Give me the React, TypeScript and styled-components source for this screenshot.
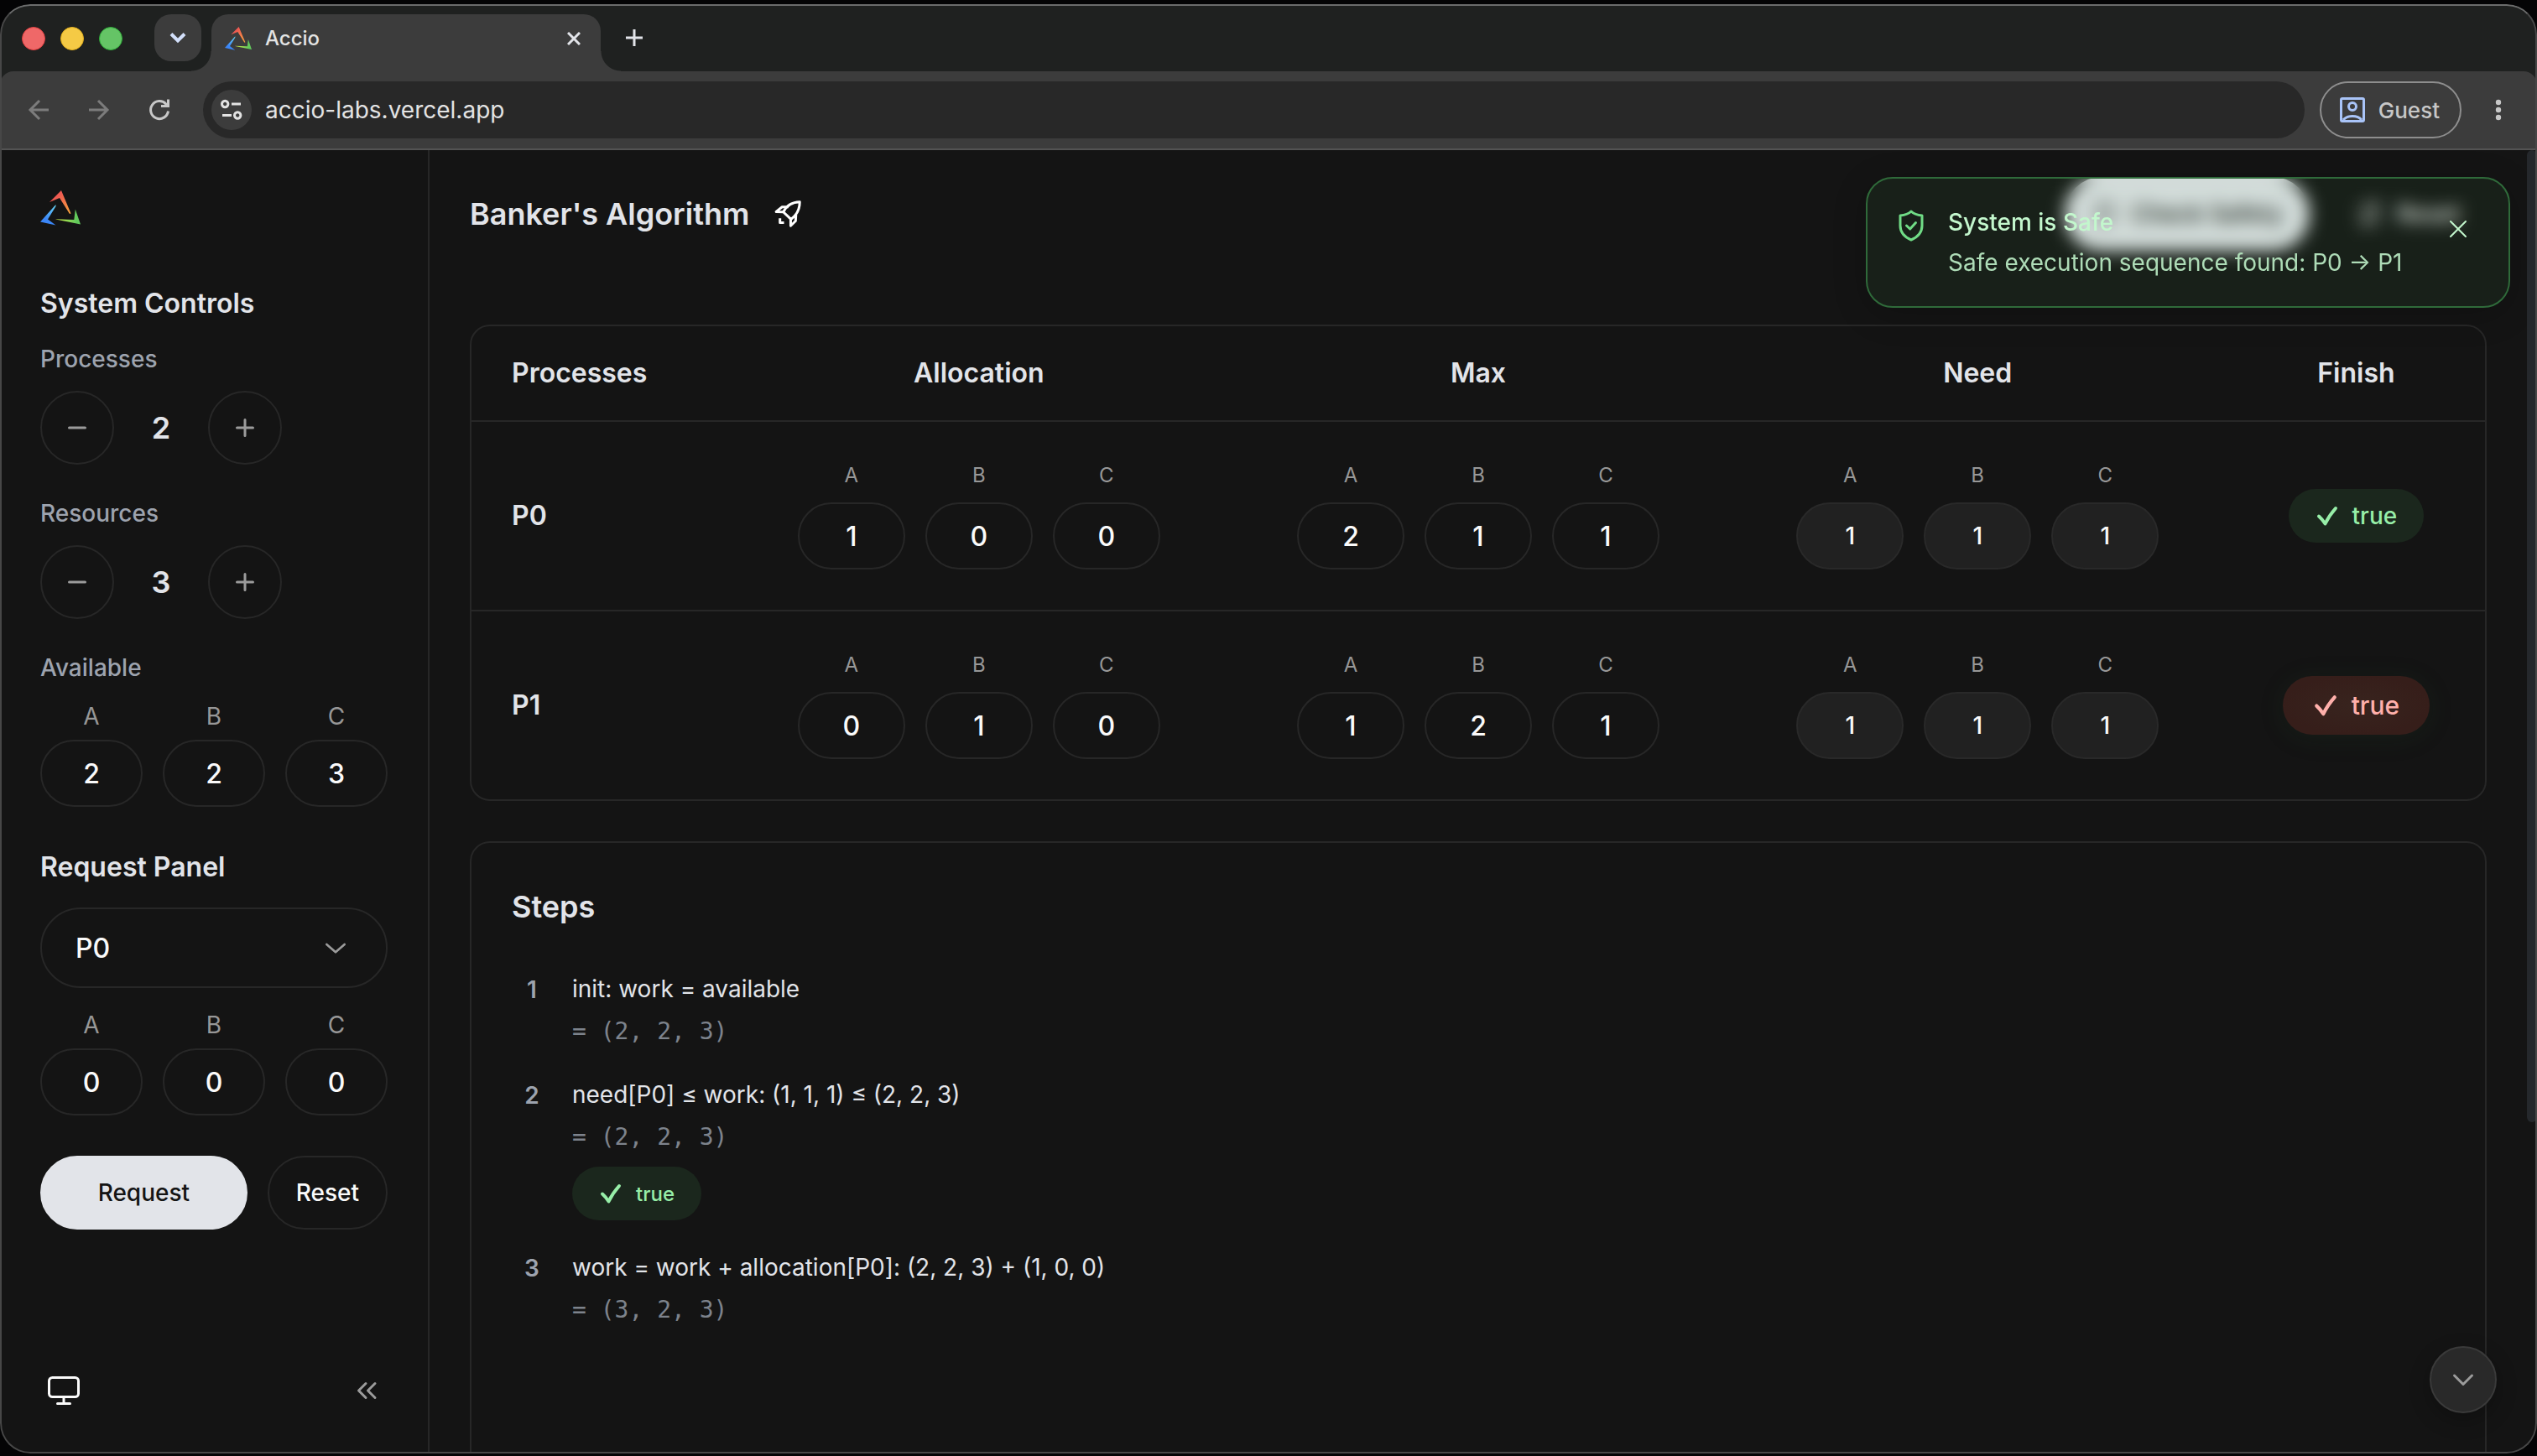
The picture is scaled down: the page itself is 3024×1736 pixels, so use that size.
import React, { useState } from 'react';
import styled, { createGlobalStyle, css } from 'styled-components';

const sans = "Inter, 'Liberation Sans', sans-serif";

const GlobalStyle = createGlobalStyle`
  *, *::before, *::after { box-sizing: border-box; }
  html, body, #root { height: 100%; }
  body { margin: 0; background: #040405; font-family: ${sans}; color: #e2e4e9; overflow: hidden; }
  button, input, select { font-family: inherit; margin: 0; }
  h1, h2, p, ol { margin: 0; padding: 0; }
  svg { display: block; flex: none; }
`;

/* ---------- browser window ---------- */

const Desktop = styled.div`
  height: 100%;
  padding: 5px 0 3px;
`;

const Window = styled.div`
  position: relative;
  height: 100%;
  display: flex;
  flex-direction: column;
  border-radius: 36px;
  overflow: hidden;
  background: #1f2120;

  &::after {
    content: '';
    position: absolute;
    inset: 0;
    border: 2px solid #474747;
    border-top-color: #6b6c6c;
    border-radius: 36px;
    pointer-events: none;
    z-index: 20;
  }
`;

const TabStrip = styled.div`
  display: flex;
  align-items: flex-end;
  height: 80px;
  padding-left: 26px;
`;

const Lights = styled.div`
  display: flex;
  gap: 18px;
  margin: 0 38px 25px 0;
`;

const Light = styled.button<{ $color: string; $edge: string }>`
  width: 28px;
  height: 28px;
  padding: 0;
  border: 1px solid ${(p) => p.$edge};
  border-radius: 50%;
  background: ${(p) => p.$color};
`;

const TabSearch = styled.button`
  display: grid;
  place-items: center;
  width: 56px;
  height: 56px;
  margin: 0 12px 12px 0;
  padding: 0;
  border: 0;
  border-radius: 20px;
  background: #3c3c3c;
`;

const Tab = styled.div`
  position: relative;
  display: flex;
  align-items: center;
  width: 464px;
  height: 68px;
  padding: 0 24px 10px 16px;
  border-radius: 20px 20px 0 0;
  background: #3c3c3c;
  font-size: 24px;
  font-weight: 500;
  line-height: 32px;

  &::before,
  &::after {
    content: '';
    position: absolute;
    bottom: 0;
    width: 24px;
    height: 24px;
  }
  &::before {
    right: 100%;
    background: radial-gradient(circle at 0 0, transparent 23px, #3c3c3c 24px);
  }
  &::after {
    left: 100%;
    background: radial-gradient(circle at 100% 0, transparent 23px, #3c3c3c 24px);
  }
`;

const TabTitle = styled.span`
  flex: 1;
  margin-left: 16px;
  color: #e3e3e3;
`;

const PlainButton = styled.button`
  display: grid;
  place-items: center;
  padding: 0;
  border: 0;
  background: none;
  color: inherit;
`;

const NewTab = styled(PlainButton)`
  margin: 0 0 28px 28px;
`;

const Toolbar = styled.div`
  display: flex;
  align-items: center;
  height: 94px;
  padding: 0 32px;
  border-bottom: 2px solid #535353;
  border-radius: 16px 16px 0 0;
  background: #3c3c3c;
  color: #c7c7c7;
`;

const NavButtons = styled.div`
  display: flex;
  gap: 44px;
  margin-right: 38px;
`;

const NavButton = styled(PlainButton)<{ $dim?: boolean }>`
  width: 28px;
  height: 28px;
  color: ${(p) => (p.$dim ? '#7c7c7c' : '#c7c7c7')};
`;

const AddressBar = styled.div`
  display: flex;
  align-items: center;
  flex: 1;
  height: 68px;
  padding: 0 10px;
  border-radius: 34px;
  background: #282828;
`;

const SiteInfo = styled(PlainButton)`
  width: 48px;
  height: 48px;
  border-radius: 50%;
  background: #3c3c3c;
  color: #e3e3e3;
`;

const Url = styled.input`
  flex: 1;
  margin-left: 16px;
  padding: 0;
  border: 0;
  outline: 0;
  background: none;
  color: #e3e3e3;
  font-size: 28px;
  line-height: 36px;
`;

const Guest = styled.button`
  display: flex;
  align-items: center;
  gap: 16px;
  height: 68px;
  margin-left: 18px;
  padding: 0 24px 0 22px;
  border: 2px solid #8e8e8e;
  border-radius: 34px;
  background: none;
  color: #c7c7c7;
  font-size: 26px;
  font-weight: 500;
`;

const Kebab = styled(PlainButton)`
  width: 28px;
  margin-left: 30px;
`;

/* ---------- page ---------- */

const Page = styled.div`
  position: relative;
  flex: 1;
  min-height: 0;
  display: flex;
  background: #141414;
`;

const Sidebar = styled.aside`
  display: flex;
  flex-direction: column;
  flex: none;
  width: 512px;
  padding: 48px 48px 0;
  border-right: 2px solid #272727;
`;

const SideHeading = styled.h2`
  font-size: 32px;
  font-weight: 600;
  line-height: 40px;
  color: #e2e4e9;
`;

const SideLabel = styled.div`
  font-size: 28px;
  font-weight: 500;
  line-height: 40px;
  color: #9da3ae;
`;

const Block = styled.section<{ $top: number; $gap: number }>`
  display: flex;
  flex-direction: column;
  gap: ${(p) => p.$gap}px;
  margin-top: ${(p) => p.$top}px;
`;

const StepperRow = styled.div`
  display: flex;
  align-items: center;
`;

const RoundButton = styled.button`
  display: grid;
  place-items: center;
  width: 88px;
  height: 88px;
  padding: 0;
  border: 2px solid #272727;
  border-radius: 50%;
  background: none;
  color: #9b9b9b;
`;

const StepperValue = styled.output`
  width: 112px;
  text-align: center;
  font-size: 36px;
  font-weight: 600;
  line-height: 44px;
`;

const Fields = styled.div`
  display: flex;
  justify-content: center;
  gap: 24px;
`;

const Field = styled.label<{ $table?: boolean }>`
  display: flex;
  flex-direction: column;
  align-items: center;
  ${(p) =>
    p.$table
      ? css`
          width: 128px;
          gap: 16px;
          font-size: 24px;
          line-height: 32px;
        `
      : css`
          flex: 1;
          min-width: 0;
          gap: 12px;
          font-size: 28px;
          line-height: 32px;
        `}
  font-weight: 400;
  color: #979797;
`;

const NumberBox = styled.input`
  width: 100%;
  height: 80px;
  padding: 0;
  border: 2px solid #272727;
  border-radius: 40px;
  outline: 0;
  background: none;
  color: #fafafa;
  text-align: center;
  font-size: 32px;
  font-weight: 500;

  &:read-only {
    background: #212121;
    border-color: #292929;
    font-size: 28px;
  }
`;

const SelectWrap = styled.div`
  position: relative;
  color: #9b9b9b;

  svg {
    position: absolute;
    right: 46px;
    top: 32px;
    pointer-events: none;
  }
`;

const ProcessSelect = styled.select`
  appearance: none;
  display: block;
  width: 100%;
  height: 96px;
  padding: 0 40px;
  border: 2px solid #272727;
  border-radius: 48px;
  background: none;
  color: #fafafa;
  font-size: 32px;
  font-weight: 500;
`;

const Actions = styled.div`
  display: flex;
  gap: 24px;
  margin-top: 48px;
`;

const Button = styled.button<{ $solid?: boolean; $grow?: boolean }>`
  display: flex;
  align-items: center;
  justify-content: center;
  gap: 16px;
  height: 88px;
  padding: 0 32px;
  ${(p) => p.$grow && 'flex: 1;'}
  border: 2px solid ${(p) => (p.$solid ? '#e2e4e9' : '#272727')};
  border-radius: 44px;
  background: ${(p) => (p.$solid ? '#e2e4e9' : 'transparent')};
  color: ${(p) => (p.$solid ? '#141414' : '#fafafa')};
  font-size: 28px;
  font-weight: 500;
`;

const HeaderButton = styled(Button)`
  padding: 0 30px;
  border-color: ${(p) => (p.$solid ? '#e2e4e9' : 'transparent')};
`;

const SideFooter = styled.footer`
  display: flex;
  align-items: center;
  justify-content: space-between;
  margin-top: auto;
  padding: 0 12px 56px 8px;
  color: #fafafa;
`;

const Collapse = styled(PlainButton)`
  color: #9b9b9b;
`;

const Main = styled.main`
  flex: 1;
  min-width: 0;
  overflow: hidden;
  padding: 32px 60px 0 48px;
`;

const Header = styled.header`
  display: flex;
  align-items: center;
  height: 88px;
  margin-bottom: 88px;
`;

const Title = styled.h1`
  font-size: 36px;
  font-weight: 600;
  line-height: 48px;
`;

const RocketButton = styled(PlainButton)`
  margin-left: 28px;
  color: #fff;
`;

const HeaderActions = styled.div`
  display: flex;
  gap: 24px;
  margin-left: auto;
`;

const Card = styled.section`
  border: 2px solid #272727;
  border-radius: 24px;
  overflow: hidden;
`;

const Table = styled.table`
  width: 100%;
  table-layout: fixed;
  border-collapse: separate;
  border-spacing: 0;

  th,
  td {
    padding: 0;
    text-align: center;
  }
  th:first-child {
    padding-left: 48px;
    text-align: left;
  }
  thead th {
    height: 114px;
    border-bottom: 2px solid #272727;
  }
  tbody th,
  tbody td {
    height: 226px;
    border-bottom: 2px solid #272727;
  }
  tbody tr:last-child > * {
    height: 224px;
    border-bottom: 0;
  }
`;

const Col = styled.col<{ $wide?: boolean }>`
  width: ${(p) => (p.$wide ? '24.8%' : 'auto')};
`;

const HeadCell = styled.th`
  font-size: 32px;
  font-weight: 600;
  line-height: 40px;
`;

const Badge = styled.span<{ $size?: 'small' | 'large'; $alert?: boolean }>`
  display: inline-flex;
  align-items: center;
  justify-content: center;
  height: ${(p) => (p.$alert ? 70 : 64)}px;
  padding: 0 ${(p) => (p.$alert ? 36 : 32)}px;
  gap: 16px;
  border-radius: 36px;
  vertical-align: middle;
  font-size: ${(p) => (p.$alert ? 30 : p.$size === 'small' ? 24 : 28)}px;
  font-weight: 500;
  ${(p) =>
    p.$alert
      ? css`
          background: radial-gradient(closest-side, #38241e, #361e1a);
          color: #ffb0ab;
          box-shadow: 0 4px 30px rgba(40, 80, 44, 0.16);
        `
      : css`
          background: #1b271d;
          color: #97eea8;
        `}
`;

const StepsCard = styled(Card)`
  height: 900px;
  margin-top: 48px;
  padding: 48px;
`;

const StepsTitle = styled.h2`
  font-size: 36px;
  font-weight: 600;
  line-height: 56px;
`;

const StepList = styled.ol`
  display: flex;
  flex-direction: column;
  gap: 32px;
  margin-top: 48px;
  list-style: none;
`;

const StepItem = styled.li`
  display: flex;
  gap: 24px;
`;

const StepNumber = styled.span`
  width: 48px;
  text-align: center;
  font-size: 28px;
  font-weight: 600;
  line-height: 46px;
  color: #9da3ae;
`;

const StepBody = styled.div`
  display: flex;
  flex-direction: column;
  align-items: flex-start;

  ${Badge} {
    margin: 14px 0 2px;
  }
`;

const StepText = styled.p`
  font-size: 28px;
  line-height: 44px;
  color: #e2e4e9;
`;

const StepResult = styled.p`
  margin-top: 8px;
  font-family: 'DejaVu Sans Mono', monospace;
  font-size: 28px;
  line-height: 42px;
  color: #7d838c;
`;

/* ---------- overlays ---------- */

const Toast = styled.div`
  position: absolute;
  top: 32px;
  right: 32px;
  display: flex;
  align-items: flex-start;
  width: 768px;
  height: 156px;
  padding: 30px 50px 0 36px;
  border: 2px solid #2f6a3a;
  border-radius: 32px;
  background: rgba(72, 152, 80, 0.1);
  backdrop-filter: blur(10px);
  box-shadow: 0 8px 40px rgba(0, 0, 0, 0.2);
  color: #c3f7cd;

  > svg {
    margin-top: 6px;
  }
`;

const ToastText = styled.div`
  flex: 1;
  margin-left: 28px;
  font-size: 28px;
  line-height: 44px;
`;

const ToastTitle = styled.p`
  font-weight: 500;
`;

const ToastBody = styled.p`
  margin-top: 4px;
  color: #aedcb7;
`;

const ToastClose = styled(PlainButton)`
  margin-top: 20px;
`;

const ScrollDown = styled.button`
  position: absolute;
  right: 48px;
  bottom: 48px;
  display: grid;
  place-items: center;
  width: 80px;
  height: 80px;
  padding: 0;
  border: 2px solid #3a3a3a;
  border-radius: 50%;
  background: #292929;
  box-shadow: 0 8px 24px rgba(0, 0, 0, 0.25);
  color: #9b9b9b;
`;

const ScrollThumb = styled.div`
  position: absolute;
  top: 0;
  right: 0;
  width: 12px;
  height: 1159px;
  border-radius: 6px;
  background: #25282c;
`;

/* ---------- drawings ---------- */

const Logo = ({ width, id }: { width: number; id: string }) => (
  <svg width={width} height={(width * 42) / 48} viewBox="0 0 48 42" aria-hidden="true">
    <defs>
      <linearGradient id={`${id}r`} x1="14" y1="4" x2="36" y2="28" gradientUnits="userSpaceOnUse">
        <stop offset="0.2" stopColor="#ee5a52" />
        <stop offset="1" stopColor="#f7a53c" />
      </linearGradient>
      <linearGradient id={`${id}b`} x1="18" y1="17" x2="6" y2="40" gradientUnits="userSpaceOnUse">
        <stop offset="0" stopColor="#6ad7f5" />
        <stop offset="0.8" stopColor="#3b86f7" />
      </linearGradient>
      <linearGradient id={`${id}g`} x1="18" y1="36" x2="47" y2="32" gradientUnits="userSpaceOnUse">
        <stop offset="0" stopColor="#d3ee45" />
        <stop offset="0.85" stopColor="#62c95c" />
      </linearGradient>
    </defs>
    <path d="M25 0 11 14l12-5L35 28l1.500-.5Z" fill={`url(#${id}r)`} />
    <path d="M18.500 17 0 37.500l18.500 4L9 34.500 18.500 19Z" fill={`url(#${id}b)`} />
    <path d="M18.500 34.500 48 40.500 41.800 22.500l-1.500 12.500-21.800-.8v1.600Z" fill={`url(#${id}g)`} />
  </svg>
);

const Glyph = ({
  d,
  size,
  box = 24,
  stroke = 2,
  cap = 'round',
}: {
  d: string;
  size: number;
  box?: number;
  stroke?: number;
  cap?: 'round' | 'butt' | 'square';
}) => (
  <svg
    width={size}
    height={size}
    viewBox={`0 0 ${box} ${box}`}
    fill="none"
    stroke="currentColor"
    strokeWidth={stroke}
    strokeLinecap={cap}
    strokeLinejoin={cap === 'round' ? 'round' : 'miter'}
    aria-hidden="true"
  >
    <path d={d} />
  </svg>
);

const Tick = ({ size = 28 }: { size?: number }) => (
  <Glyph size={size} box={28} stroke={4} d="M4 14.500Q7.500 17.500 11.500 23.500Q16 14 24 5" />
);

/* ---------- data ---------- */

const names = ['A', 'B', 'C'];
const rows = [
  { id: 'P0', allocation: [1, 0, 0], max: [2, 1, 1], need: [1, 1, 1], alert: false },
  { id: 'P1', allocation: [0, 1, 0], max: [1, 2, 1], need: [1, 1, 1], alert: true },
];
const steps = [
  { text: 'init: work = available', result: '= (2, 2, 3)', ok: false },
  { text: 'need[P0] ≤ work: (1, 1, 1) ≤ (2, 2, 3)', result: '= (2, 2, 3)', ok: true },
  { text: 'work = work + allocation[P0]: (2, 2, 3) + (1, 0, 0)', result: '= (3, 2, 3)', ok: false },
];

const Vector = ({ values, table, readOnly }: { values: number[]; table?: boolean; readOnly?: boolean }) => (
  <Fields>
    {values.map((value, i) => (
      <Field key={names[i]} $table={table}>
        {names[i]}
        <NumberBox type="text" inputMode="numeric" defaultValue={value} readOnly={readOnly} />
      </Field>
    ))}
  </Fields>
);

const Stepper = ({ label, initial }: { label: string; initial: number }) => {
  const [value, setValue] = useState(initial);
  return (
    <StepperRow>
      <RoundButton aria-label={`Fewer ${label}`} onClick={() => setValue(value - 1)}>
        <Glyph size={24} stroke={3} d="M2.500 12h19" />
      </RoundButton>
      <StepperValue>{value}</StepperValue>
      <RoundButton aria-label={`More ${label}`} onClick={() => setValue(value + 1)}>
        <Glyph size={24} stroke={3} d="M2.500 12h19M12 2.500v19" />
      </RoundButton>
    </StepperRow>
  );
};

export default function App() {
  const [toast, setToast] = useState(true);
  return (
    <Desktop>
      <GlobalStyle />
      <Window>
        <TabStrip>
          <Lights>
            <Light aria-label="Close window" $color="#ef6868" $edge="#e23f41" />
            <Light aria-label="Minimise window" $color="#f5ca45" $edge="#e0ae1c" />
            <Light aria-label="Zoom window" $color="#65c466" $edge="#2eaa38" />
          </Lights>
          <TabSearch aria-label="Search tabs">
            <svg width="20" height="14" viewBox="0 0 20 14" fill="none" stroke="#d3e0fb" strokeWidth="4">
              <path d="M2 2.500 10 10.500 18 2.500" />
            </svg>
          </TabSearch>
          <Tab>
            <Logo width={32} id="t" />
            <TabTitle>Accio</TabTitle>
            <PlainButton aria-label="Close tab">
              <Glyph size={16} box={16} stroke={3} cap="butt" d="M1 1 15 15M15 1 1 15" />
            </PlainButton>
          </Tab>
          <NewTab aria-label="New tab">
            <Glyph size={24} box={24} stroke={3} cap="butt" d="M2 12H22M12 2V22" />
          </NewTab>
        </TabStrip>

        <Toolbar>
          <NavButtons>
            <NavButton $dim aria-label="Back">
              <Glyph size={28} box={28} stroke={3} cap="butt" d="M26 14H4M15 3 4 14l11 11" />
            </NavButton>
            <NavButton $dim aria-label="Forward">
              <Glyph size={28} box={28} stroke={3} cap="butt" d="M2 14H24M13 3 24 14 13 25" />
            </NavButton>
            <NavButton aria-label="Reload">
              <Glyph size={28} box={28} stroke={3} cap="butt" d="M24.500 15.500A10.500 10.500 0 1 1 22 7.200L24.500 9.500M16 9.500h8.500V1.500" />
            </NavButton>
          </NavButtons>
          <AddressBar>
            <SiteInfo aria-label="Site information">
              <Glyph
                size={28}
                box={28}
                stroke={3}
                cap="butt"
                d="M2.500 7a3.700 3.700 0 1 0 7.400 0 3.700 3.700 0 1 0-7.400 0M14 7H25M3 20.500H14M17.500 20.500a3.700 3.700 0 1 0 7.400 0 3.700 3.700 0 1 0-7.400 0"
              />
            </SiteInfo>
            <Url aria-label="Address" defaultValue="accio-labs.vercel.app" />
          </AddressBar>
          <Guest>
            <svg width="30" height="30" viewBox="0 0 30 30" fill="none" stroke="#a9c4f8" strokeWidth="3">
              <rect x="1.500" y="1.500" width="27" height="27" rx="1.500" />
              <circle cx="15" cy="11" r="4.500" />
              <path d="M4 27c5-6 17-6 22 0" />
            </svg>
            Guest
          </Guest>
          <Kebab aria-label="Menu">
            <svg width="8" height="26" viewBox="0 0 8 26" fill="currentColor">
              <circle cx="4" cy="4" r="3.200" />
              <circle cx="4" cy="13" r="3.200" />
              <circle cx="4" cy="22" r="3.200" />
            </svg>
          </Kebab>
        </Toolbar>

        <Page>
          <Sidebar>
            <Logo width={48} id="s" />
            <Block $top={73} $gap={24}>
              <SideHeading>System Controls</SideHeading>
            </Block>
            <Block $top={26} $gap={18}>
              <SideLabel>Processes</SideLabel>
              <Stepper label="processes" initial={2} />
            </Block>
            <Block $top={38} $gap={18}>
              <SideLabel>Resources</SideLabel>
              <Stepper label="resources" initial={3} />
            </Block>
            <Block $top={38} $gap={22}>
              <SideLabel>Available</SideLabel>
              <Vector values={[2, 2, 3]} />
            </Block>
            <Block $top={52} $gap={28}>
              <SideHeading id="request">Request Panel</SideHeading>
              <SelectWrap>
                <ProcessSelect aria-labelledby="request" defaultValue="P0">
                  <option>P0</option>
                  <option>P1</option>
                </ProcessSelect>
                <Glyph size={32} stroke={2} d="M4 9l8 7 8-7" />
              </SelectWrap>
              <Vector values={[0, 0, 0]} />
            </Block>
            <Actions>
              <Button $solid $grow>
                Request
              </Button>
              <Button>Reset</Button>
            </Actions>
            <SideFooter>
              <PlainButton aria-label="Theme">
                <svg width="40" height="38" viewBox="0 0 40 38" fill="none" stroke="currentColor" strokeWidth="3" strokeLinecap="round">
                  <rect x="2.500" y="3.500" width="35" height="23" rx="4" />
                  <path d="M20 27v7M12.500 34.500h15" />
                </svg>
              </PlainButton>
              <Collapse aria-label="Collapse sidebar">
                <Glyph size={26} box={26} stroke={3} d="M12 4.500 3.500 13l8.500 8.500M23 4.500 14.500 13l8.500 8.500" />
              </Collapse>
            </SideFooter>
          </Sidebar>

          <Main>
            <Header>
              <Title>Banker's Algorithm</Title>
              <RocketButton aria-label="Launch">
                <svg width="36" height="36" viewBox="0 0 24 24" fill="none" stroke="currentColor" strokeWidth="2" strokeLinejoin="round">
                  <path d="M8.500 10.500C11 5.500 15.500 2.600 21.500 2.500c0 5.500-2.500 10.500-7 13.800Z" />
                  <path d="M12.500 6.500 7.500 6.500 2.800 10.300 8.500 10.500M18.500 12.500l-.3 5.200-3.900 3.800V16.300M5.800 15.500V19H9" />
                </svg>
              </RocketButton>
              <HeaderActions>
                <HeaderButton $solid>
                  <Glyph size={32} d="M12 3 5 6v6c0 4 3 7 7 9 4-2 7-5 7-9V6Z" />
                  Check Safety
                </HeaderButton>
                <HeaderButton>
                  <Glyph size={32} d="M20 12a8 8 0 0 1-14 5M4 12a8 8 0 0 1 14-5M18 2v5h-5M6 22v-5h5" />
                  Reset
                </HeaderButton>
              </HeaderActions>
            </Header>

            <Card>
              <Table>
                <colgroup>
                  <Col />
                  <Col $wide />
                  <Col $wide />
                  <Col $wide />
                  <Col />
                </colgroup>
                <thead>
                  <tr>
                    {['Processes', 'Allocation', 'Max', 'Need', 'Finish'].map((name) => (
                      <HeadCell key={name} scope="col">
                        {name}
                      </HeadCell>
                    ))}
                  </tr>
                </thead>
                <tbody>
                  {rows.map((row) => (
                    <tr key={row.id}>
                      <HeadCell scope="row">{row.id}</HeadCell>
                      <td>
                        <Vector table values={row.allocation} />
                      </td>
                      <td>
                        <Vector table values={row.max} />
                      </td>
                      <td>
                        <Vector table readOnly values={row.need} />
                      </td>
                      <td>
                        <Badge $alert={row.alert}>
                          <Tick size={row.alert ? 30 : 28} />
                          true
                        </Badge>
                      </td>
                    </tr>
                  ))}
                </tbody>
              </Table>
            </Card>

            <StepsCard>
              <StepsTitle>Steps</StepsTitle>
              <StepList>
                {steps.map((step, i) => (
                  <StepItem key={step.text}>
                    <StepNumber>{i + 1}</StepNumber>
                    <StepBody>
                      <StepText>{step.text}</StepText>
                      <StepResult>{step.result}</StepResult>
                      {step.ok && (
                        <Badge $size="small">
                          <Tick />
                          true
                        </Badge>
                      )}
                    </StepBody>
                  </StepItem>
                ))}
              </StepList>
            </StepsCard>
          </Main>

          {toast && (
            <Toast role="status">
              <svg width="32" height="40" viewBox="0 0 32 40" fill="none" stroke="#70dc86" strokeWidth="3" strokeLinecap="round" strokeLinejoin="round">
                <path d="M16 3c-3 3-8 4.500-13 5v12c0 9 6 14 13 17 7-3 13-8 13-17V8c-5-.5-10-2-13-5Z" />
                <path d="M10.500 20l4.200 4 6.800-7.500" />
              </svg>
              <ToastText>
                <ToastTitle>System is Safe</ToastTitle>
                <ToastBody>Safe execution sequence found: P0 → P1</ToastBody>
              </ToastText>
              <ToastClose aria-label="Dismiss" onClick={() => setToast(false)}>
                <Glyph size={20} box={20} stroke={2} d="M1 1 19 19M19 1 1 19" />
              </ToastClose>
            </Toast>
          )}
          <ScrollThumb />
          <ScrollDown aria-label="Scroll down">
            <Glyph size={28} box={28} stroke={3} d="M3.500 9 14 19.500 24.500 9" />
          </ScrollDown>
        </Page>
      </Window>
    </Desktop>
  );
}
